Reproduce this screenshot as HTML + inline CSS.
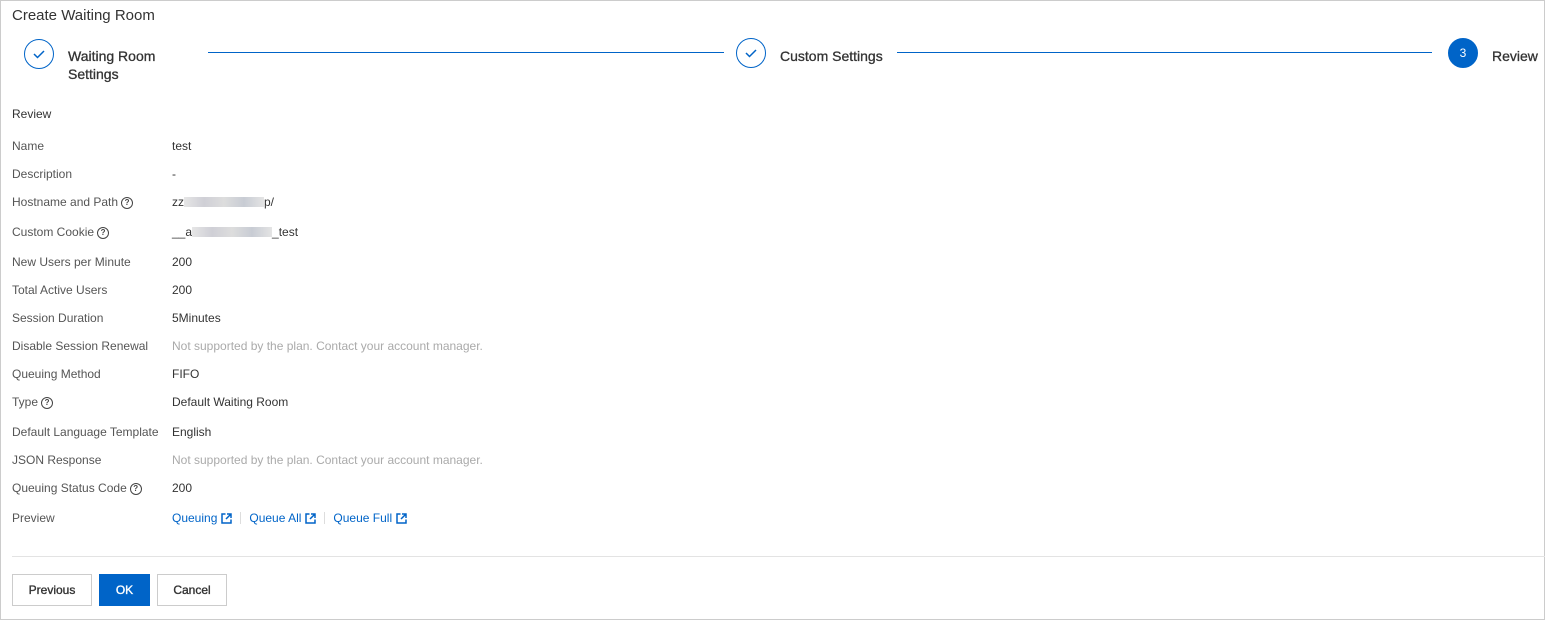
<!DOCTYPE html><html><head><style>
body{margin:0;width:1545px;height:620px;position:relative;font-family:"Liberation Sans",Arial,sans-serif;background:#fff;overflow:hidden}
.frame{position:absolute;left:0;top:0;width:1543px;height:618px;border:1px solid #ccc}
.a{position:absolute;white-space:nowrap}
.t{font-size:15px;color:#333;left:12px;top:7px}
.c{position:absolute;width:30px;height:30px;border:1px solid #0064c8;border-radius:50%;box-sizing:border-box}
.st{font-size:14px;color:#333;line-height:18px;-webkit-text-stroke:0.3px #333}
.ln{position:absolute;height:1px;background:#0064c8;top:52px}
.l{font-size:12px;color:#555;left:12px}
.v{font-size:12px;color:#333;left:172px}
.g{color:#aaa}
.q{display:inline-block;width:10px;height:10px;border:1px solid #444;border-radius:50%;font-size:8px;line-height:10px;text-align:center;margin-left:3px;vertical-align:0px;color:#444;font-weight:bold;position:relative;top:-1px}
.blur{display:inline-block;width:80px;height:10px;background:linear-gradient(90deg,#e6e6e6,#cfcfd6,#ddd,#c8ccd4,#e4e4e4);vertical-align:-1px}
a{color:#0064c8;text-decoration:none}
.ext{display:inline-block;width:11px;height:11px;margin-left:4px;vertical-align:-2px}
.sep{display:inline-block;width:1px;height:12px;background:#ddd;margin:0 8px;vertical-align:-2px}
.b{position:absolute;top:574px;height:32px;box-sizing:border-box;border:1px solid #ccc;font-size:12px;text-align:center;line-height:30px;color:#333;background:#fff;-webkit-text-stroke:0.35px #333}
</style></head><body><div class="frame"></div>
<div class="a t">Create Waiting Room</div>
<div class="c" style="left:24px;top:39px"><svg width="28" height="28" style="position:absolute;left:0;top:0"><path d="M9 14l3.5 3.5L19 11" fill="none" stroke="#0064c8" stroke-width="1.5"/></svg></div>
<div class="a st" style="left:68px;top:47px">Waiting Room<br>Settings</div>
<div class="ln" style="left:208px;width:516px"></div>
<div class="c" style="left:736px;top:38px"><svg width="28" height="28" style="position:absolute;left:0;top:0"><path d="M9 14l3.5 3.5L19 11" fill="none" stroke="#0064c8" stroke-width="1.5"/></svg></div>
<div class="a st" style="left:780px;top:47px">Custom Settings</div>
<div class="ln" style="left:897px;width:535px"></div>
<div class="c" style="left:1448px;top:38px;background:#0064c8;color:#fff;font-size:12px;text-align:center;line-height:28px">3</div>
<div class="a st" style="left:1492px;top:47px">Review</div>
<div class="a" style="left:12px;top:107px;font-size:12px;color:#333">Review</div>
<div class="a l" style="top:139px">Name</div><div class="a v" style="top:139px">test</div>
<div class="a l" style="top:167px">Description</div><div class="a v" style="top:167px">-</div>
<div class="a l" style="top:195px">Hostname and Path<span class="q">?</span></div><div class="a v" style="top:195px">zz<span class="blur"></span>p/</div>
<div class="a l" style="top:225px">Custom Cookie<span class="q">?</span></div><div class="a v" style="top:225px">__a<span class="blur"></span>_test</div>
<div class="a l" style="top:255px">New Users per Minute</div><div class="a v" style="top:255px">200</div>
<div class="a l" style="top:283px">Total Active Users</div><div class="a v" style="top:283px">200</div>
<div class="a l" style="top:311px">Session Duration</div><div class="a v" style="top:311px">5Minutes</div>
<div class="a l" style="top:339px">Disable Session Renewal</div><div class="a v g" style="top:339px">Not supported by the plan. Contact your account manager.</div>
<div class="a l" style="top:367px">Queuing Method</div><div class="a v" style="top:367px">FIFO</div>
<div class="a l" style="top:395px">Type<span class="q">?</span></div><div class="a v" style="top:395px">Default Waiting Room</div>
<div class="a l" style="top:425px">Default Language Template</div><div class="a v" style="top:425px">English</div>
<div class="a l" style="top:453px">JSON Response</div><div class="a v g" style="top:453px">Not supported by the plan. Contact your account manager.</div>
<div class="a l" style="top:481px">Queuing Status Code<span class="q">?</span></div><div class="a v" style="top:481px">200</div>
<div class="a l" style="top:511px">Preview</div><div class="a v" style="top:511px"><a>Queuing</a><svg class="ext" viewBox="0 0 11 11"><path d="M4.5 1H1v9h9V6.5" fill="none" stroke="#0064c8" stroke-width="1.5"/><path d="M6 1h4v4M10 1L5 6" fill="none" stroke="#0064c8" stroke-width="1.5"/></svg><span class="sep"></span><a>Queue All</a><svg class="ext" viewBox="0 0 11 11"><path d="M4.5 1H1v9h9V6.5" fill="none" stroke="#0064c8" stroke-width="1.5"/><path d="M6 1h4v4M10 1L5 6" fill="none" stroke="#0064c8" stroke-width="1.5"/></svg><span class="sep"></span><a>Queue Full</a><svg class="ext" viewBox="0 0 11 11"><path d="M4.5 1H1v9h9V6.5" fill="none" stroke="#0064c8" stroke-width="1.5"/><path d="M6 1h4v4M10 1L5 6" fill="none" stroke="#0064c8" stroke-width="1.5"/></svg></div>
<div class="a" style="left:12px;top:556px;width:1533px;height:1px;background:#e3e3e3"></div>
<div class="b" style="left:12px;width:80px">Previous</div>
<div class="b" style="left:99px;width:51px;background:#0064c8;border-color:#0064c8;color:#fff;-webkit-text-stroke:0.35px #fff">OK</div>
<div class="b" style="left:157px;width:70px">Cancel</div>
</body></html>
